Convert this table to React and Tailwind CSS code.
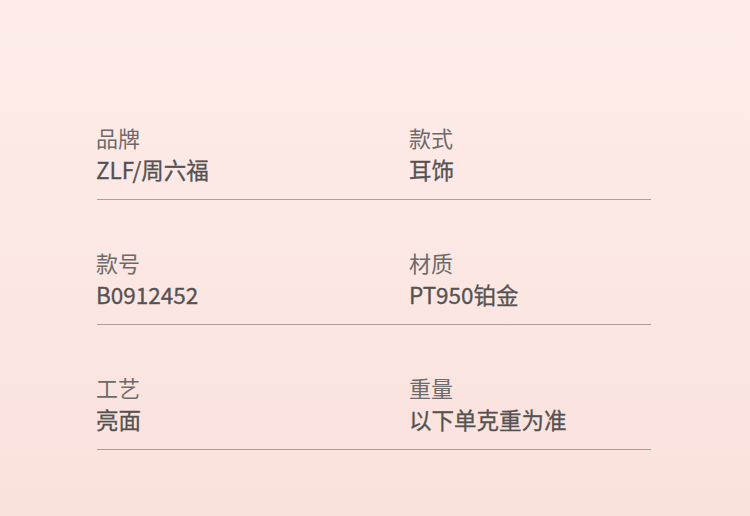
export default function App() {
  const rows = [
    [
      ["品牌", "ZLF/周六福"],
      ["款式", "耳饰"],
    ],
    [
      ["款号", "B0912452"],
      ["材质", "PT950铂金"],
    ],
    [
      ["工艺", "亮面"],
      ["重量", "以下单克重为准"],
    ],
  ];
  return (
    <div
      className="w-[750px] h-[516px] bg-gradient-to-b from-[#fdedea] to-[#fae1dc] pt-[75px]"
      style={{ fontFamily: '"Noto Sans CJK SC", "Noto Sans", sans-serif' }}
    >
      <div className="ml-[97px] w-[554px]">
        {rows.map((row, i) => (
          <div
            key={i}
            className="grid grid-cols-[313px_1fr] pt-[46px] pb-[14px] border-b border-[#b09c98]"
          >
            {row.map(([label, value]) => (
              <div key={label} className="-ml-px">
                <div className="text-[22px] leading-[32px] text-[#6c6a6a]">{label}</div>
                <div className="text-[22.5px] leading-[32px] text-[#545252] [-webkit-text-stroke:0.3px_#545252]">{value}</div>
              </div>
            ))}
          </div>
        ))}
      </div>
    </div>
  );
}
